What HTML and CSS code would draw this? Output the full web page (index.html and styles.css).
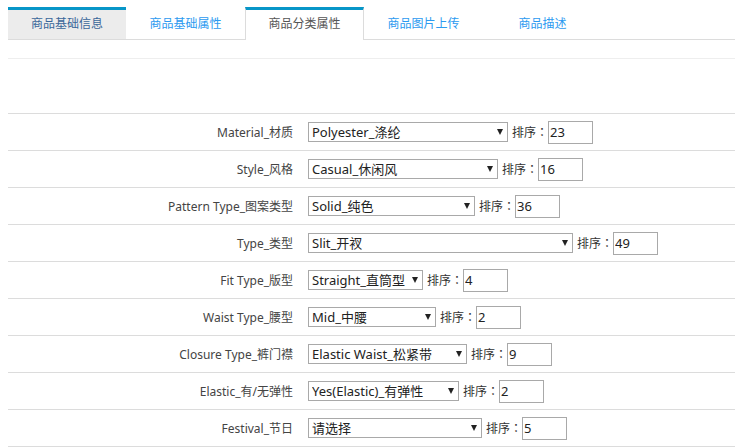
FILE: index.html
```html
<!DOCTYPE html>
<html lang="zh-CN">
<head>
<meta charset="utf-8">
<title>商品分类属性</title>
<link rel="stylesheet" href="styles.css">
</head>
<body>
<div class="page">
  <div class="tabs">
    <div class="tab tab-first">商品基础信息</div>
    <div class="tab">商品基础属性</div>
    <div class="tab tab-active">商品分类属性</div>
    <div class="tab">商品图片上传</div>
    <div class="tab">商品描述</div>
  </div>
  <div class="spacer"></div>
  <div class="rows">
    <div class="row">
      <div class="label">Material_材质</div>
      <div class="value"><span class="sel" style="width:200px"><select><option>Polyester_涤纶</option></select></span><span class="sort">排序<span class="colon">：</span></span><input class="ord" type="text" value="23"></div>
    </div>
    <div class="row">
      <div class="label">Style_风格</div>
      <div class="value"><span class="sel" style="width:190px"><select><option>Casual_休闲风</option></select></span><span class="sort">排序<span class="colon">：</span></span><input class="ord" type="text" value="16"></div>
    </div>
    <div class="row">
      <div class="label">Pattern Type_图案类型</div>
      <div class="value"><span class="sel" style="width:167px"><select><option>Solid_纯色</option></select></span><span class="sort">排序<span class="colon">：</span></span><input class="ord" type="text" value="36"></div>
    </div>
    <div class="row">
      <div class="label">Type_类型</div>
      <div class="value"><span class="sel" style="width:265px"><select><option>Slit_开衩</option></select></span><span class="sort">排序<span class="colon">：</span></span><input class="ord" type="text" value="49"></div>
    </div>
    <div class="row">
      <div class="label">Fit Type_版型</div>
      <div class="value"><span class="sel" style="width:115px"><select><option>Straight_直筒型</option></select></span><span class="sort">排序<span class="colon">：</span></span><input class="ord" type="text" value="4"></div>
    </div>
    <div class="row">
      <div class="label">Waist Type_腰型</div>
      <div class="value"><span class="sel" style="width:128px"><select><option>Mid_中腰</option></select></span><span class="sort">排序<span class="colon">：</span></span><input class="ord" type="text" value="2"></div>
    </div>
    <div class="row">
      <div class="label">Closure Type_裤门襟</div>
      <div class="value"><span class="sel" style="width:159px"><select><option>Elastic Waist_松紧带</option></select></span><span class="sort">排序<span class="colon">：</span></span><input class="ord" type="text" value="9"></div>
    </div>
    <div class="row">
      <div class="label">Elastic_有/无弹性</div>
      <div class="value"><span class="sel" style="width:151px"><select><option>Yes(Elastic)_有弹性</option></select></span><span class="sort">排序<span class="colon">：</span></span><input class="ord" type="text" value="2"></div>
    </div>
    <div class="row">
      <div class="label">Festival_节日</div>
      <div class="value"><span class="sel" style="width:174px"><select><option>请选择</option></select></span><span class="sort">排序<span class="colon">：</span></span><input class="ord" type="text" value="5"></div>
    </div>
  </div>
</div>
</body>
</html>
```
FILE: styles.css
```css
html, body {
  margin: 0;
  padding: 0;
  background: #fff;
  overflow: hidden;
}
body {
  font-family: "Noto Sans", "Noto Sans CJK SC", sans-serif;
  font-size: 12px;
  color: #444;
}
.page {
  padding: 7px 0 0 8px;
}
.tabs {
  display: flex;
  height: 32px;
  border-bottom: 1px solid #dcdcdc;
}
.tab {
  box-sizing: border-box;
  width: 119px;
  height: 32px;
  border-top: 3px solid transparent;
  text-align: center;
  line-height: 28px;
  font-size: 12px;
  color: #2b9af0;
}
.tab-first {
  width: 118px;
  background: #ececec;
  border-top-color: #0796c8;
  color: #3a679a;
}
.tab-active {
  height: 33px;
  margin-bottom: -1px;
  background: #fff;
  border-top-color: #0796c8;
  border-left: 1px solid #dcdcdc;
  border-right: 1px solid #dcdcdc;
  color: #555;
}
.spacer {
  margin-top: 18px;
  height: 54px;
  border-top: 1px solid #eee;
}
.row {
  display: flex;
  align-items: center;
  height: 36px;
  border-top: 1px solid #dcdcdc;
}
.row:last-child {
  border-bottom: 1px solid #dcdcdc;
}
.label {
  width: 285px;
  flex: none;
  text-align: right;
  font-size: 12px;
  color: #444;
}
.value {
  display: flex;
  align-items: center;
  padding-left: 15px;
}
.sel {
  position: relative;
  display: block;
  height: 20px;
}
.sel select {
  -webkit-appearance: none;
  appearance: none;
  box-sizing: border-box;
  width: 100%;
  height: 20px;
  margin: 0;
  padding: 0 16px 0 3px;
  border: 1px solid #a9a9a9;
  border-radius: 0;
  background: #fff;
  font-family: "Noto Sans", "Noto Sans CJK SC", sans-serif;
  font-size: 13px;
  color: #222;
  outline: none;
}
.sel::after {
  content: "";
  position: absolute;
  right: 5px;
  top: 7px;
  width: 0;
  height: 0;
  border-left: 3.5px solid transparent;
  border-right: 3.5px solid transparent;
  border-top: 6px solid #222;
  pointer-events: none;
}
.sort {
  display: flex;
  margin-left: 4px;
  width: 36px;
  font-size: 12px;
  color: #333;
  white-space: nowrap;
}
.colon {
  display: inline-block;
  width: 12px;
  text-align: center;
  font-family: "Noto Sans CJK JP", sans-serif;
}
.ord {
  box-sizing: border-box;
  width: 45px;
  height: 23px;
  margin: 0;
  padding: 0 1px;
  border: 1px solid #a9a9a9;
  border-radius: 0;
  font-family: "Noto Sans", "Noto Sans CJK SC", sans-serif;
  font-size: 13px;
  color: #222;
  outline: none;
}
```
